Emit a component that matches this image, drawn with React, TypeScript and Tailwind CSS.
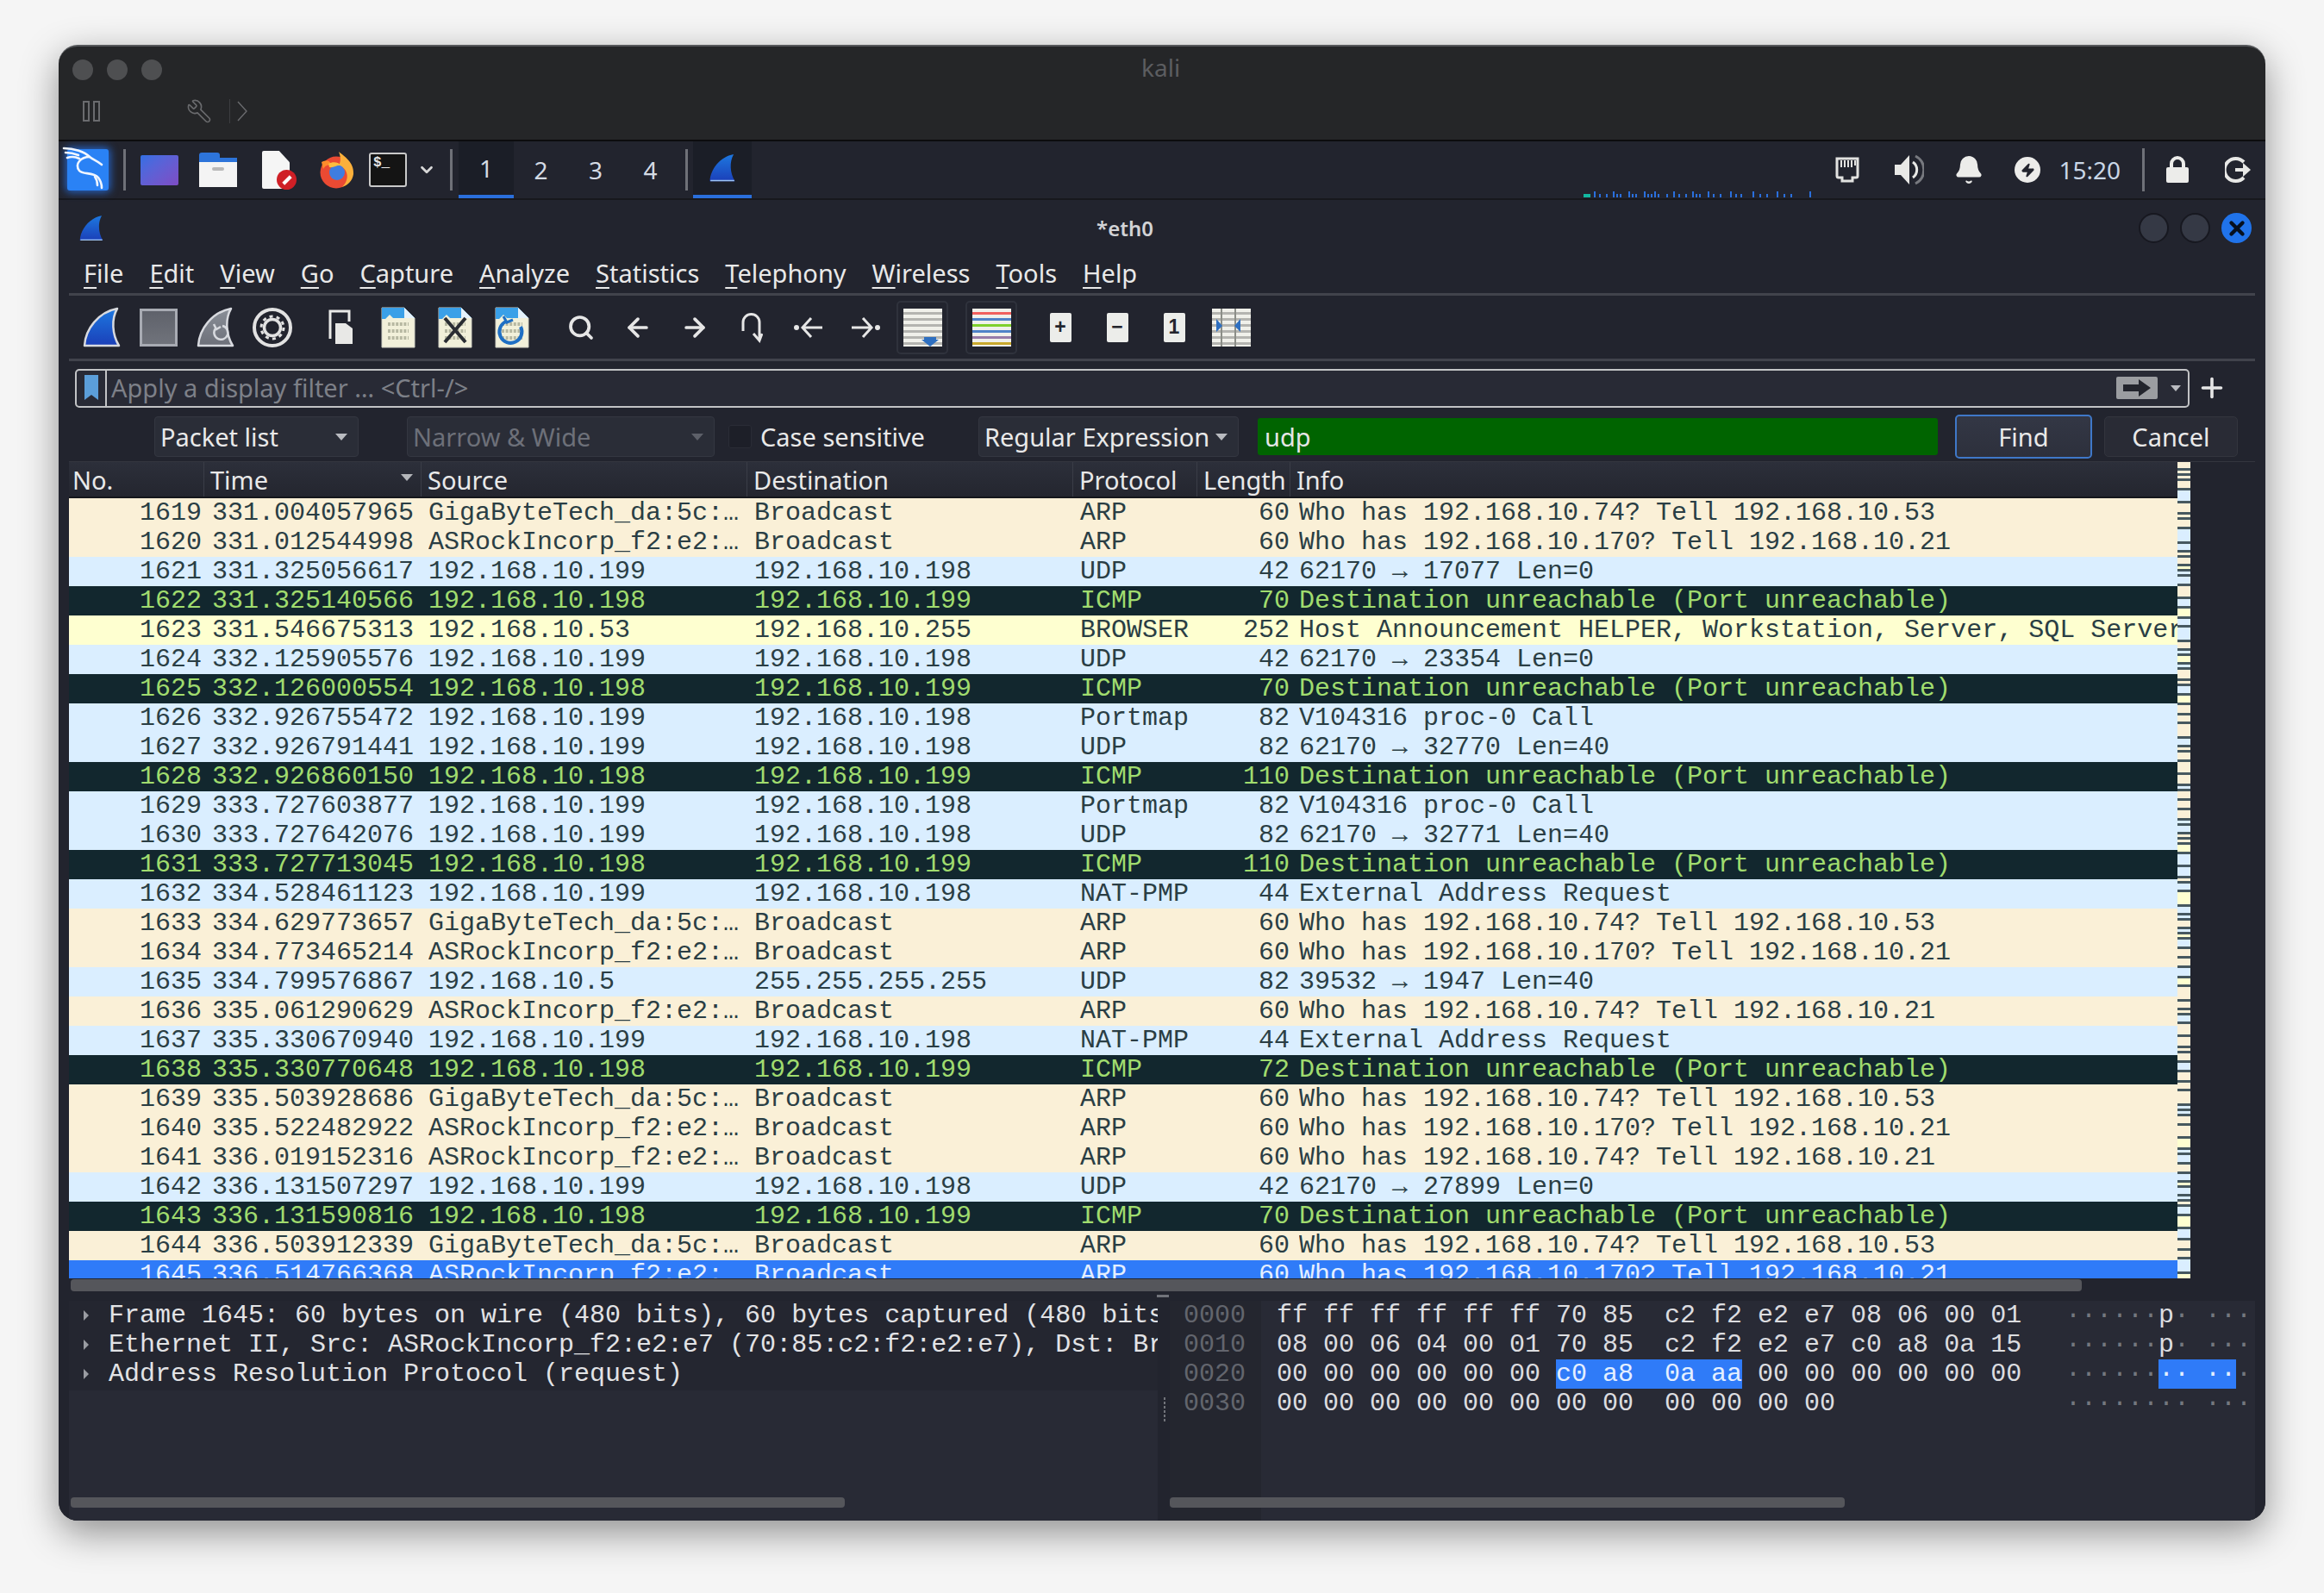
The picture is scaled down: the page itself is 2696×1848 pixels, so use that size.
import * as React from "react";
import { ArrowLeft, ArrowRight, Bell, ChevronDown, Plus, Search, Wrench, X, Zap } from "lucide-react";

type Packet = {
  no: number;
  time: string;
  src: string;
  dst: string;
  proto: string;
  len: number;
  info: string;
  kind: "arp" | "udp" | "err" | "smb" | "sel";
};

const GIGA = "GigaByteTech_da:5c:…";
const ASR = "ASRockIncorp_f2:e2:…";
const A = "192.168.10.199";
const B = "192.168.10.198";
const W74_53 = "Who has 192.168.10.74? Tell 192.168.10.53";
const W170_21 = "Who has 192.168.10.170? Tell 192.168.10.21";
const W74_21 = "Who has 192.168.10.74? Tell 192.168.10.21";
const UNR = "Destination unreachable (Port unreachable)";
const BC = "Broadcast";

const packets: Packet[] = [
  { no: 1619, time: "331.004057965", src: GIGA, dst: BC, proto: "ARP", len: 60, info: W74_53, kind: "arp" },
  { no: 1620, time: "331.012544998", src: ASR, dst: BC, proto: "ARP", len: 60, info: W170_21, kind: "arp" },
  { no: 1621, time: "331.325056617", src: A, dst: B, proto: "UDP", len: 42, info: "62170 → 17077 Len=0", kind: "udp" },
  { no: 1622, time: "331.325140566", src: B, dst: A, proto: "ICMP", len: 70, info: UNR, kind: "err" },
  { no: 1623, time: "331.546675313", src: "192.168.10.53", dst: "192.168.10.255", proto: "BROWSER", len: 252, info: "Host Announcement HELPER, Workstation, Server, SQL Server, NT Workstation", kind: "smb" },
  { no: 1624, time: "332.125905576", src: A, dst: B, proto: "UDP", len: 42, info: "62170 → 23354 Len=0", kind: "udp" },
  { no: 1625, time: "332.126000554", src: B, dst: A, proto: "ICMP", len: 70, info: UNR, kind: "err" },
  { no: 1626, time: "332.926755472", src: A, dst: B, proto: "Portmap", len: 82, info: "V104316 proc-0 Call", kind: "udp" },
  { no: 1627, time: "332.926791441", src: A, dst: B, proto: "UDP", len: 82, info: "62170 → 32770 Len=40", kind: "udp" },
  { no: 1628, time: "332.926860150", src: B, dst: A, proto: "ICMP", len: 110, info: UNR, kind: "err" },
  { no: 1629, time: "333.727603877", src: A, dst: B, proto: "Portmap", len: 82, info: "V104316 proc-0 Call", kind: "udp" },
  { no: 1630, time: "333.727642076", src: A, dst: B, proto: "UDP", len: 82, info: "62170 → 32771 Len=40", kind: "udp" },
  { no: 1631, time: "333.727713045", src: B, dst: A, proto: "ICMP", len: 110, info: UNR, kind: "err" },
  { no: 1632, time: "334.528461123", src: A, dst: B, proto: "NAT-PMP", len: 44, info: "External Address Request", kind: "udp" },
  { no: 1633, time: "334.629773657", src: GIGA, dst: BC, proto: "ARP", len: 60, info: W74_53, kind: "arp" },
  { no: 1634, time: "334.773465214", src: ASR, dst: BC, proto: "ARP", len: 60, info: W170_21, kind: "arp" },
  { no: 1635, time: "334.799576867", src: "192.168.10.5", dst: "255.255.255.255", proto: "UDP", len: 82, info: "39532 → 1947 Len=40", kind: "udp" },
  { no: 1636, time: "335.061290629", src: ASR, dst: BC, proto: "ARP", len: 60, info: W74_21, kind: "arp" },
  { no: 1637, time: "335.330670940", src: A, dst: B, proto: "NAT-PMP", len: 44, info: "External Address Request", kind: "udp" },
  { no: 1638, time: "335.330770648", src: B, dst: A, proto: "ICMP", len: 72, info: UNR, kind: "err" },
  { no: 1639, time: "335.503928686", src: GIGA, dst: BC, proto: "ARP", len: 60, info: W74_53, kind: "arp" },
  { no: 1640, time: "335.522482922", src: ASR, dst: BC, proto: "ARP", len: 60, info: W170_21, kind: "arp" },
  { no: 1641, time: "336.019152316", src: ASR, dst: BC, proto: "ARP", len: 60, info: W74_21, kind: "arp" },
  { no: 1642, time: "336.131507297", src: A, dst: B, proto: "UDP", len: 42, info: "62170 → 27899 Len=0", kind: "udp" },
  { no: 1643, time: "336.131590816", src: B, dst: A, proto: "ICMP", len: 70, info: UNR, kind: "err" },
  { no: 1644, time: "336.503912339", src: GIGA, dst: BC, proto: "ARP", len: 60, info: W74_53, kind: "arp" },
  { no: 1645, time: "336.514766368", src: ASR, dst: BC, proto: "ARP", len: 60, info: W170_21, kind: "sel" },
];

const rowClass = {
  arp: "bg-[#faf0d7] text-[#2a3e44]",
  udp: "bg-[#daeeff] text-[#2a3e44]",
  err: "bg-[#12272e] text-[#a0dc6e]",
  smb: "bg-[#feffd0] text-[#2a3e44]",
  sel: "bg-[#2f7bf8] text-[#e4efff]",
};

// overview strip next to the list, light bands split by thin grey lines
const bandColor = ["#faf0d7", "#faf0d7", "#daeeff", "#faf0d7", "#daeeff", "#daeeff", "#faf0d7", "#feffd0"];
const bandSizes = [7, 8, 3, 9, 7, 3, 12, 8, 7, 3, 3, 10, 8, 14];

function Minimap() {
  const stripes = [];
  let y = 0;
  let i = 0;
  while (y < 947) {
    const h = bandSizes[(i * 5 + (i >> 3)) % bandSizes.length];
    stripes.push(<div key={i} className="shrink-0 border-b-[3px] border-[#46585f]" style={{ height: h + 3, background: bandColor[(i * 3 + (i >> 2)) % bandColor.length] }} />);
    y += h + 3;
    i++;
  }
  return <div className="flex h-[947px] w-[15px] shrink-0 flex-col overflow-hidden">{stripes}</div>;
}

function Shark({ size = 44, tall = 48, outline = false, dim = false }: { size?: number; tall?: number; outline?: boolean; dim?: boolean }) {
  const id = React.useId().replace(/:/g, "");
  return (
    <svg width={size} height={tall} viewBox="0 0 44 48" fill="none">
      <defs>
        <linearGradient id={id} x1="0" y1="0" x2="0" y2="1">
          <stop offset="0" stopColor={dim ? "#8a8f98" : "#1d78e0"} />
          <stop offset="1" stopColor={dim ? "#6d7079" : "#1b3fb8"} />
        </linearGradient>
      </defs>
      <path
        d="M2 45 C3 26 18 6 40 2 C33 14 34 32 42 45 Z"
        fill={`url(#${id})`}
        stroke={outline ? "#d8dadf" : "none"}
        strokeWidth={outline ? 2.5 : 0}
        strokeLinejoin="round"
      />
      {dim && <path d="M30 22 a8 8 0 1 1 -8 3 m-2 -5 l3 6 l5 -3" stroke="#d8dadf" strokeWidth="2.5" />}
      {!outline && <path d="M3 44 H41" stroke="#9ec4f2" strokeWidth="2" />}
    </svg>
  );
}

function KaliLogo() {
  return (
    <div className="flex h-[48px] w-[48px] items-center justify-center rounded-[3px] bg-[#2a82f5] shadow-[0_0_10px_2px_rgba(40,120,245,0.75)]">
      <svg width="54" height="52" viewBox="0 0 54 52" fill="none" stroke="#f0f6ff" strokeWidth="2.6" strokeLinecap="round" strokeLinejoin="round" className="-mt-[6px] -ml-[6px] shrink-0">
        <path d="M2 4 C14 4 26 8 32 14 C37 18 40 18 46 23" />
        <path d="M4 9 C10 9 14 10 19 12" />
        <path d="M6 15 C12 13 16 14 20 16" />
        <path d="M32 14 C22 14 14 22 20 30 C24 35 36 31 42 38 C45 42 46 46 46 50" />
        <path d="M38 37 C41 41 41 45 41 47" />
      </svg>
    </div>
  );
}

function Firefox() {
  return (
    <svg width="44" height="44" viewBox="0 0 44 44">
      <circle cx="21" cy="25" r="18.5" fill="#ea4a33" />
      <path d="M24 1 C30 6 42 13 41 27 C40 35 34 40 28 42 C38 32 34 20 24 17 C27 12 26 6 24 1 Z" fill="#fbb03b" />
      <path d="M4 13 C9 11 12 10 15 15 C11 17 8 17 6 21 Z" fill="#ff8c2b" />
      <circle cx="22" cy="25" r="9" fill="#3f7de0" />
      <path d="M12 15 C17 12 24 13 27 17 C22 16 18 20 13 19 Z" fill="#fdbd3f" />
    </svg>
  );
}

function DocFile({ mark }: { mark?: "x" | "reload" }) {
  return (
    <svg width="40" height="48" viewBox="0 0 40 48">
      <path d="M1 1 H27 L39 13 V47 H1 Z" fill="#f2f0da" stroke="#cfcfc4" />
      <path d="M1 1 H27 L39 13 H14 L10 9 L5 14 H1 Z" fill="#3aa0e8" />
      <path d="M27 1 L39 13 H27 Z" fill="#e6f2fa" />
      {[20, 28, 36].map((y) => (
        <path key={y} d={`M8 ${y} H32`} stroke="#b7b8a2" strokeWidth="4" strokeDasharray="3 1.6" />
      ))}
      {mark === "x" && <path d="M8 13 L32 41 M32 13 L8 41" stroke="#2a2d33" strokeWidth="4" />}
      {mark === "reload" && (
        <g fill="none" stroke="#1f6fc4" strokeWidth="4">
          <path d="M13 17 A13 13 0 1 0 30 23" />
          <path d="M10 11 L14 18 L21 15" strokeWidth="3" />
        </g>
      )}
    </svg>
  );
}

function StripedSheet({ children, colors }: { children?: React.ReactNode; colors?: string[] }) {
  const lines = colors ?? ["#b4b4b0", "#b4b4b0", "#b4b4b0", "#b4b4b0", "#b4b4b0", "#b4b4b0"];
  return (
    <svg width="45" height="44" viewBox="0 0 45 44">
      <rect width="45" height="44" fill="#f0f0ea" />
      {lines.map((c, i) => (
        <rect key={i} x="0" y={4 + i * 7} width="45" height="3" fill={c} />
      ))}
      {children}
    </svg>
  );
}

function KeyCap({ children }: { children: React.ReactNode }) {
  return (
    <div className="flex h-[34px] w-[25px] items-center justify-center rounded-[2px] bg-[#ecedea] font-['Liberation_Sans',sans-serif] text-[23px] font-bold leading-none text-[#23252d]">
      {children}
    </div>
  );
}

function ToolSlot({ children, boxed = false }: { children: React.ReactNode; boxed?: boolean }) {
  return (
    <div className="flex h-full w-[66px] shrink-0 items-center justify-center">
      {boxed ? (
        <div className="flex h-[62px] w-[60px] items-center justify-center rounded-[5px] border-2 border-[#2f323c]">{children}</div>
      ) : (
        children
      )}
    </div>
  );
}

function Combo({ label, width, dim = false }: { label: string; width: string; dim?: boolean }) {
  return (
    <div className={`flex h-[47px] items-center justify-between whitespace-nowrap rounded-[4px] border border-[#343741] bg-[#2a2d37] pl-[6px] pr-[12px] ${width} ${dim ? "text-[#6d7079]" : "text-[#e9e9e9]"}`}>
      <span>{label}</span>
      <span className={`h-0 w-0 border-x-[7px] border-t-[8px] border-x-transparent ${dim ? "border-t-[#5d6069]" : "border-t-[#b9bbc0]"}`} />
    </div>
  );
}

function Menu({ label }: { label: string }) {
  return (
    <span>
      <span className="underline decoration-[2px] underline-offset-[5px]">{label[0]}</span>
      {label.slice(1)}
    </span>
  );
}

function HeaderCell({ label, width, first = false, last = false, sorted = false }: { label: string; width: string; first?: boolean; last?: boolean; sorted?: boolean }) {
  return (
    <div className={`relative flex h-full items-center ${first ? "pl-[4px]" : "pl-[7px]"} ${width} ${last ? "flex-1" : "shrink-0 border-r border-[#3a3d47]"}`}>
      {label}
      {sorted && <span className="absolute right-[9px] top-[14px] h-0 w-0 border-x-[7px] border-t-[8px] border-x-transparent border-t-[#b4b6ba]" />}
    </div>
  );
}

function PacketRow({ p }: { p: Packet }) {
  return (
    <div className={`flex h-[34px] shrink-0 overflow-hidden whitespace-pre leading-[34px] ${rowClass[p.kind]}`}>
      <span className="w-[154px] shrink-0 text-right">{p.no}</span>
      <span className="ml-[12px] w-[251px] shrink-0">{p.time}</span>
      <span className="w-[378px] shrink-0 overflow-hidden">{p.src}</span>
      <span className="w-[378px] shrink-0">{p.dst}</span>
      <span className="w-[180px] shrink-0">{p.proto}</span>
      <span className="w-[63px] shrink-0 text-right">{p.len}</span>
      <span className="ml-[11px] min-w-0 flex-1 overflow-hidden">{p.info}</span>
    </div>
  );
}

const P = <span className="text-[#dcdde0]">p</span>;

const hexLines = [
  { off: "0000", hex: "ff ff ff ff ff ff 70 85  c2 f2 e2 e7 08 06 00 01", ascii: <>······{P}· ·······</> },
  { off: "0010", hex: "08 00 06 04 00 01 70 85  c2 f2 e2 e7 c0 a8 0a 15", ascii: <>······{P}· ·······</> },
  { off: "0030", hex: "00 00 00 00 00 00 00 00  00 00 00 00", ascii: "········ ····" },
];

function HexRow({ off, children, ascii }: { off: string; children: React.ReactNode; ascii: React.ReactNode }) {
  return (
    <div className="flex h-[34px] leading-[34px] whitespace-pre">
      <span className="ml-[16px] w-[108px] shrink-0 text-[#62656d]">{off}</span>
      <span className="w-[915px] shrink-0 text-[#dcdde0]">{children}</span>
      <span className="text-[#74777f]">{ascii}</span>
    </div>
  );
}

export default function App() {
  return (
    <div className="h-[1848px] w-[2696px] overflow-hidden bg-[#f5f5f5] pl-[68px] pt-[52px] font-['Noto_Sans',sans-serif]">
      <div className="flex h-[1712px] w-[2560px] flex-col overflow-hidden rounded-[22px] border-t-2 border-[#55575a] bg-[#252628] shadow-[0_14px_44px_rgba(0,0,0,0.42)]">
        {/* parallels title bar */}
        <div className="flex h-[110px] shrink-0 flex-col border-b-2 border-[#0c0c0e]">
          <div className="relative flex h-[54px] items-center pl-[16px]">
            <div className="flex gap-[16px]">
              <span className="h-[24px] w-[24px] rounded-full bg-[#4e4f51]" />
              <span className="h-[24px] w-[24px] rounded-full bg-[#4e4f51]" />
              <span className="h-[24px] w-[24px] rounded-full bg-[#4e4f51]" />
            </div>
            <span className="absolute left-[1256px] top-[3px] text-[28px] text-[#5c5d60]">kali</span>
          </div>
          <div className="flex h-[42px] items-center pl-[28px] text-[#6a6b6e]">
            <span className="h-[24px] w-[8px] border-2 border-[#6a6b6e]" />
            <span className="ml-[4px] h-[24px] w-[8px] border-2 border-[#6a6b6e]" />
            <Wrench size={30} strokeWidth={1.3} className="ml-[100px] scale-x-[-1]" />
            <span className="ml-[20px] h-[28px] w-px bg-[#3d3e41]" />
            <svg width="14" height="26" viewBox="0 0 14 26" fill="none" stroke="#6a6b6e" strokeWidth="1.4" className="ml-[7px]">
              <path d="M2 2 L12 13 L2 24" />
            </svg>
          </div>
        </div>

        {/* kali panel */}
        <div className="relative flex h-[68px] shrink-0 items-stretch border-b-2 border-[#17181d] bg-[#22242e] pl-[10px] text-[28px] text-[#d5dbe4]">
          <div className="flex items-center"><KaliLogo /></div>
          <div className="mx-[17px] my-[9px] w-[3px] bg-[#6f7178]" />
          <div className="flex items-center">
            <div className="h-[35px] w-[44px] rounded-[2px] bg-gradient-to-br from-[#2f6fe4] to-[#7d4cc4]" />
            <div className="relative ml-[24px] h-[40px] w-[44px]">
              <div className="absolute left-0 top-0 h-[14px] w-[24px] rounded-t-[3px] bg-[#2d74da]" />
              <div className="absolute left-0 top-[6px] h-[8px] w-[44px] bg-[#2d74da]" />
              <div className="absolute left-0 top-[11px] flex h-[29px] w-[44px] items-start justify-center bg-[#f4f4f4] pt-[6px]">
                <div className="h-[4px] w-[14px] rounded-full bg-[#b9b9b9]" />
              </div>
            </div>
            <div className="relative ml-[29px] h-[44px] w-[36px]">
              <div className="h-[44px] w-[32px] rounded-[2px] bg-[#f5f5f5] [clip-path:polygon(0_0,62%_0,100%_30%,100%_100%,0_100%)]" />
              <div className="absolute bottom-[-1px] right-[-4px] flex h-[23px] w-[23px] items-center justify-center rounded-full bg-[#cf1f26]">
                <div className="h-[12px] w-[4px] rotate-45 bg-white" />
              </div>
            </div>
            <div className="ml-[29px] flex items-center"><Firefox /></div>
            <div className="ml-[15px] h-[40px] w-[44px] rounded-[3px] border-2 border-[#c9c9c9] bg-[#141414] pl-[3px] font-['Liberation_Mono',monospace] text-[16px] font-bold leading-[20px] text-[#e6e6e6]">$_</div>
            <ChevronDown size={22} strokeWidth={3} className="ml-[12px] text-[#d8d8d8]" />
          </div>
          <div className="ml-[16px] my-[9px] w-[3px] bg-[#6f7178]" />
          <div className="ml-[7px] flex h-full w-[64px] items-center justify-center border-b-4 border-[#2a6fdc] bg-[#1b1e27]">1</div>
          <div className="flex w-[63px] items-center justify-center">2</div>
          <div className="flex w-[64px] items-center justify-center">3</div>
          <div className="flex w-[63px] items-center justify-center">4</div>
          <div className="ml-[9px] my-[9px] w-[3px] bg-[#6f7178]" />
          <div className="ml-[6px] flex h-full w-[68px] items-center justify-center border-b-4 border-[#2a6fdc] bg-[#1b1e27]"><Shark size={32} tall={36} /></div>
          <div className="flex flex-1 items-center justify-end pr-[15px]">
            <svg width="28" height="30" viewBox="0 0 28 30" className="mr-[39px]" fill="none">
              <path d="M2 2 H26 V22 Q26 24 24 24 H20 V28 H8 V24 H4 Q2 24 2 22 Z" stroke="#e2e2e0" strokeWidth="3" />
              <path d="M7 4 V12 M11 4 V12 M15 4 V12 M19 4 V12 M23 4 V10" stroke="#e2e2e0" strokeWidth="2" />
            </svg>
            <svg width="36" height="40" viewBox="0 0 36 40" className="mr-[34px]">
              <path d="M2 14 H9 L19 3 V37 L9 26 H2 Z" fill="#e8e8e6" />
              <path d="M23 11 A11 11 0 0 1 23 29" fill="none" stroke="#e8e8e6" strokeWidth="3" />
              <path d="M26 4 A18 18 0 0 1 26 36" fill="none" stroke="#77797f" strokeWidth="3" />
            </svg>
            <Bell size={36} fill="#ececea" stroke="#ececea" strokeWidth={1.4} className="mr-[35px]" />
            <div className="mr-[21px] flex h-[30px] w-[30px] items-center justify-center rounded-full bg-[#ececea]">
              <Zap size={17} fill="#22242e" stroke="#22242e" />
            </div>
            <span className="text-[#c9d6e6]">15:20</span>
            <div className="ml-[25px] mr-[24px] h-[50px] w-[3px] bg-[#6f7178]" />
            <svg width="28" height="32" viewBox="0 0 28 32" className="mr-[41px]" fill="none">
              <path d="M7 15 V9 A7 7 0 0 1 21 9 V15" stroke="#ececea" strokeWidth="4" />
              <rect x="1" y="13" width="26" height="18" rx="2" fill="#ececea" />
            </svg>
            <svg width="32" height="34" viewBox="0 0 32 34" fill="none" stroke="#e8e8e6" strokeWidth="4">
              <path d="M22 8 A13 13 0 1 0 22 26" />
              <path d="M12 17 H26" />
              <path d="M21 9 L30 17 L21 25 Z" fill="#e8e8e6" stroke="none" />
            </svg>
          </div>
          {/* net load graph of the panel, overlaps its lower edge */}
          <svg width="270" height="8" viewBox="0 0 270 8" className="absolute bottom-[1px] left-[1769px]">
            <rect x="0" y="4" width="8" height="4" fill="#12b8a0" />
            {[12, 18, 26, 34, 38, 42, 52, 56, 60, 70, 74, 78, 82, 86, 96, 104, 110, 118, 126, 130, 134, 144, 150, 158, 170, 176, 182, 196, 204, 212, 224, 232, 240, 262].map((x, i) => (
              <rect key={x} x={x} y={i % 3 === 0 ? 1 : 4} width="2" height={i % 3 === 0 ? 7 : 4} fill="#2a6fdc" />
            ))}
          </svg>
        </div>

        {/* wireshark window */}
        <div className="flex min-h-0 flex-1 flex-col bg-[#22242e] px-[12px] text-[29px] text-[#e9e9e9]">
          <div className="relative flex h-[66px] shrink-0 items-center justify-center">
            <div className="absolute left-[10px] top-[17px]"><Shark size={32} tall={32} /></div>
            <span className="ml-[-86px] text-[24px] font-semibold text-[#d2d3d6]">*eth0</span>
            <div className="absolute right-[4px] top-[15px] flex gap-[13px]">
              <span className="h-[35px] w-[35px] rounded-full border-2 border-[#171820] bg-[#353945]" />
              <span className="h-[35px] w-[35px] rounded-full border-2 border-[#171820] bg-[#353945]" />
              <span className="flex h-[35px] w-[35px] items-center justify-center rounded-full bg-[#2073ea]">
                <X size={26} strokeWidth={4} className="text-[#06101e]" />
              </span>
            </div>
          </div>
          <div className="flex h-[45px] shrink-0 items-center gap-[30px] border-b-[3px] border-[#41434c] pb-[6px] pl-[17px] leading-none">
            {["File", "Edit", "View", "Go", "Capture", "Analyze", "Statistics", "Telephony", "Wireless", "Tools", "Help"].map((m) => (
              <Menu key={m} label={m} />
            ))}
          </div>

          {/* toolbar */}
          <div className="flex h-[76px] shrink-0 items-center border-b-[3px] border-[#41434c] pl-[5px]">
            <ToolSlot><Shark outline /></ToolSlot>
            <ToolSlot><div className="h-[44px] w-[44px] border-[3px] border-[#a8abb3] bg-gradient-to-b from-[#5f626b] to-[#70737b]" /></ToolSlot>
            <ToolSlot><Shark outline dim /></ToolSlot>
            <ToolSlot>
              <svg width="48" height="48" viewBox="0 0 48 48" fill="none" stroke="#e2e2e2">
                <circle cx="24" cy="24" r="21" strokeWidth="4" />
                <circle cx="24" cy="24" r="9.5" strokeWidth="3.5" />
                <circle cx="24" cy="24" r="13" strokeWidth="3" strokeDasharray="4 4.2" />
              </svg>
            </ToolSlot>
            <div className="w-[14px] shrink-0" />
            <ToolSlot>
              <svg width="30" height="42" viewBox="0 0 30 42">
                <path d="M2 34 V2 H24 V14" fill="none" stroke="#e8e8e6" strokeWidth="3" />
                <path d="M8 16 H20 L28 22 V40 H8 Z" fill="#e8e8e6" />
              </svg>
            </ToolSlot>
            <ToolSlot><DocFile /></ToolSlot>
            <ToolSlot><DocFile mark="x" /></ToolSlot>
            <ToolSlot><DocFile mark="reload" /></ToolSlot>
            <div className="w-[14px] shrink-0" />
            <ToolSlot><Search size={32} strokeWidth={2.8} className="text-[#e6e6e6]" /></ToolSlot>
            <ToolSlot><ArrowLeft size={34} strokeWidth={2.6} className="text-[#e6e6e6]" /></ToolSlot>
            <ToolSlot><ArrowRight size={34} strokeWidth={2.6} className="text-[#e6e6e6]" /></ToolSlot>
            <ToolSlot>
              <svg width="26" height="36" viewBox="0 0 26 36" fill="none" stroke="#e6e6e6" strokeWidth="3">
                <path d="M3 22 V12 A9.5 9.5 0 0 1 22 12 V31" />
                <path d="M15 25 L22 33 L25 25" />
              </svg>
            </ToolSlot>
            <ToolSlot>
              <svg width="34" height="30" viewBox="0 0 34 30" fill="none" stroke="#e6e6e6" strokeWidth="3">
                <circle cx="3" cy="15" r="3" fill="#e6e6e6" stroke="none" />
                <path d="M33 15 H11 M20 4 L10 15 L20 26" />
              </svg>
            </ToolSlot>
            <ToolSlot>
              <svg width="34" height="30" viewBox="0 0 34 30" fill="none" stroke="#e6e6e6" strokeWidth="3">
                <circle cx="31" cy="15" r="3" fill="#e6e6e6" stroke="none" />
                <path d="M1 15 H23 M14 4 L24 15 L14 26" />
              </svg>
            </ToolSlot>
            <ToolSlot boxed>
              <StripedSheet>
                <path d="M21 36 H41 L31 44 Z M24 33 H38 V38 H24 Z" fill="#2e6fc0" />
              </StripedSheet>
            </ToolSlot>
            <div className="w-[14px] shrink-0" />
            <ToolSlot boxed>
              <StripedSheet colors={["#f0605e", "#4f82c8", "#7fd02c", "#4f82c8", "#967ba8", "#c9a82c"]} />
            </ToolSlot>
            <div className="w-[14px] shrink-0" />
            <ToolSlot><KeyCap>+</KeyCap></ToolSlot>
            <ToolSlot><KeyCap>−</KeyCap></ToolSlot>
            <ToolSlot><KeyCap>1</KeyCap></ToolSlot>
            <ToolSlot>
              <StripedSheet>
                <path d="M11 0 V44 M27 0 V44" stroke="#8c8e88" strokeWidth="2" />
                <path d="M5 12 L12 20 L5 27 Z M33 12 L26 20 L33 27 Z" fill="#2e6fc0" />
              </StripedSheet>
            </ToolSlot>
          </div>

          {/* display filter */}
          <div className="flex h-[62px] shrink-0 items-center pl-[7px]">
            <div className="flex h-[45px] w-[2453px] items-center rounded-[5px] border-2 border-[#c2c3c5] bg-[#282a35] text-[#7d8088]">
              <div className="flex h-full w-[35px] items-center justify-center border-r-2 border-[#c2c3c5]">
                <svg width="18" height="30" viewBox="0 0 18 30"><path d="M1 0 H17 V29 L9 23 L1 29 Z" fill="#5b9ed9" /></svg>
              </div>
              <span className="ml-[5px] flex-1">Apply a display filter … &lt;Ctrl-/&gt;</span>
              <div className="flex h-[26px] w-[48px] items-center justify-center rounded-[2px] bg-[#9b9da1]">
                <svg width="36" height="20" viewBox="0 0 36 20"><path d="M2 6 H20 V0 L34 10 L20 20 V14 H2 Z" fill="#23252d" /></svg>
              </div>
              <span className="ml-[15px] mr-[8px] h-0 w-0 border-x-[6px] border-t-[7px] border-x-transparent border-t-[#b9bbc0]" />
            </div>
            <Plus size={36} strokeWidth={2.4} className="ml-[8px] text-[#e6e6e6]" />
          </div>

          {/* find bar */}
          <div className="flex h-[55px] shrink-0 items-center border-b border-[#34363f] pb-[3px]">
            <div className="ml-[99px]"><Combo label="Packet list" width="w-[237px]" /></div>
            <div className="ml-[56px]"><Combo label="Narrow & Wide" width="w-[357px]" dim /></div>
            <div className="ml-[16px] h-[27px] w-[27px] rounded-[3px] border border-[#2a2c36] bg-[#1d1f28]" />
            <span className="ml-[10px]">Case sensitive</span>
            <div className="ml-[62px]"><Combo label="Regular Expression" width="w-[302px]" /></div>
            <div className="ml-[22px] flex h-[43px] w-[789px] items-center rounded-[3px] bg-[#006400] pl-[8px] text-[#e6e6e6]">udp</div>
            <div className="ml-[20px] flex h-[51px] w-[159px] items-center justify-center rounded-[5px] border-2 border-[#3f78c8] bg-gradient-to-b from-[#333745] to-[#2d303c]">Find</div>
            <div className="ml-[14px] flex h-[47px] w-[155px] items-center justify-center rounded-[5px] border border-[#33353e] bg-[#292b35]">Cancel</div>
          </div>

          {/* packet list */}
          <div className="flex h-[947px] shrink-0">
            <div className="flex w-[2446px] shrink-0 flex-col overflow-hidden">
              <div className="flex h-[42px] shrink-0 items-center border-b-2 border-[#15171c] bg-gradient-to-b from-[#2c2f3a] to-[#24262f] leading-none">
                <HeaderCell label="No." width="w-[157px]" first />
                <HeaderCell label="Time" width="w-[252px]" sorted />
                <HeaderCell label="Source" width="w-[378px]" />
                <HeaderCell label="Destination" width="w-[378px]" />
                <HeaderCell label="Protocol" width="w-[144px]" />
                <HeaderCell label="Length" width="w-[108px]" />
                <HeaderCell label="Info" width="" last />
              </div>
              <div className="flex h-[905px] flex-col overflow-hidden font-['Liberation_Mono',monospace] text-[30px]">
                {packets.map((p) => (
                  <PacketRow key={p.no} p={p} />
                ))}
              </div>
            </div>
            <Minimap />
            <div className="flex-1 bg-[#22242e]" />
          </div>

          {/* packet list scrollbar */}
          <div className="flex h-[26px] shrink-0 flex-col">
            <div className="mt-px ml-[2px] h-[14px] w-[2333px] rounded-[4px] bg-[#55565b]" />
            <div className="relative h-[11px]">
              <div className="absolute left-[1262px] top-[4px] h-[3px] w-[14px] bg-[#71737a]" />
            </div>
          </div>

          {/* detail and bytes */}
          <div className="flex min-h-0 flex-1 bg-[#282a35] font-['Liberation_Mono',monospace] text-[30px]">
            <div className="flex w-[1263px] shrink-0 flex-col overflow-hidden">
              <div className="flex flex-col bg-[#242630] pb-[2px]">
                {[
                  "Frame 1645: 60 bytes on wire (480 bits), 60 bytes captured (480 bits)",
                  "Ethernet II, Src: ASRockIncorp_f2:e2:e7 (70:85:c2:f2:e2:e7), Dst: Broadcast",
                  "Address Resolution Protocol (request)",
                ].map((t) => (
                  <div key={t} className="flex h-[34px] items-center whitespace-pre leading-[34px] text-[#e2e3e6]">
                    <span className="ml-[17px] mr-[23px] h-0 w-0 shrink-0 border-y-[6px] border-l-[6px] border-y-transparent border-l-[#9a9ca2]" />
                    <span>{t}</span>
                  </div>
                ))}
              </div>
              <div className="min-h-0 flex-1" />
              <div className="mb-[15px] ml-[2px] h-[12px] w-[898px] rounded-[4px] bg-[#55565b]" />
            </div>
            <div className="relative w-[14px] shrink-0 bg-[#22242e]">
              <div className="absolute left-[7px] top-[112px] h-[30px] w-[2px] [background:repeating-linear-gradient(180deg,#71737a_0_3px,transparent_3px_5px)]" />
            </div>
            <div className="relative flex min-w-0 flex-1 flex-col overflow-hidden">
              <div className="absolute inset-y-0 left-0 w-[106px] bg-[#24262f]" />
              <div className="relative flex flex-col">
                {hexLines.slice(0, 2).map((l) => (
                  <HexRow key={l.off} off={l.off} ascii={l.ascii}>{l.hex}</HexRow>
                ))}
                <HexRow
                  off="0020"
                  ascii={
                    <>
                      ······<span className="bg-[#2f7bf8] text-[#e4efff]">·· ··</span>·····
                    </>
                  }
                >
                  00 00 00 00 00 00 <span className="bg-[#2f7bf8] text-[#e4efff]">c0 a8  0a aa</span> 00 00 00 00 00 00
                </HexRow>
                <HexRow off={hexLines[2].off} ascii={hexLines[2].ascii}>{hexLines[2].hex}</HexRow>
              </div>
              <div className="min-h-0 flex-1" />
              <div className="relative mb-[15px] h-[12px] w-[783px] rounded-[4px] bg-[#55565b]" />
            </div>
          </div>
        </div>
      </div>
    </div>
  );
}
